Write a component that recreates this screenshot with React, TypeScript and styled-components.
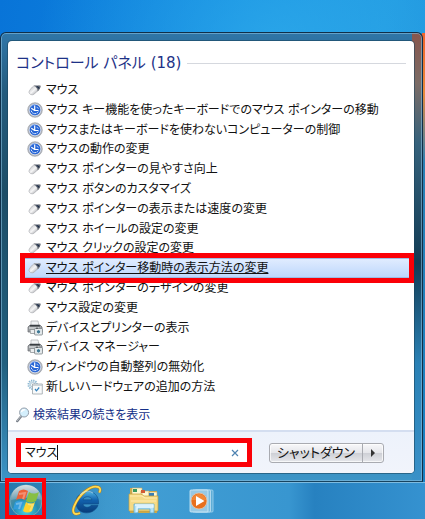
import React, { useState } from "react";
import styled, { createGlobalStyle, css } from "styled-components";

const GlobalStyle = createGlobalStyle`
  * { box-sizing: border-box; }
  body {
    margin: 0;
    font-family: "DejaVu Sans", "Noto Sans CJK JP", sans-serif;
    font-size: 12px;
    color: #111;
  }
  button, input { font: inherit; color: inherit; }
`;

const Desktop = styled.div`
  min-height: 100vh;
  display: flex;
  flex-direction: column;
  overflow: hidden;
  background:
    linear-gradient(#f0642c, #e88a3a 60px, #2a80b4 130px, #1680c4) right 33px / 3px 100% no-repeat,
    linear-gradient(110deg, transparent 78%, rgba(120, 205, 245, 0.2) 79%, transparent 84%),
    radial-gradient(circle at 65% 12%, rgba(50, 175, 236, 0.75), transparent 45%),
    linear-gradient(100deg, #0874d8, #1189e0 45%, #2098e0 75%, #1e8fd8);
`;

const StartMenu = styled.main`
  margin: 32px 2px 0 0;
  padding: 8px 8px 8px 7px;
  border: 1px solid #102f49;
  border-bottom-color: #17435f;
  border-radius: 6px 6px 0 0;
  box-shadow: inset 0 0 0 1px rgba(135, 190, 222, 0.6);
  background:
    linear-gradient(#88564d, #7c6c66 50px, #36627c 110px, #123c55 230px, #2a81b5 330px, #3991c8) right / 10px 100% no-repeat,
    linear-gradient(#2f76a8, #245b7d 60px, #1d4d67 160px, #215f7e 330px, #3c95c8);
`;

const Panel = styled.div`
  border-radius: 4px;
  overflow: hidden;
  background: #fff;
  box-shadow: 0 0 0 1px rgba(25, 65, 90, 0.55);
`;

const Results = styled.section`
  padding: 10px 8px 5px 8px;
`;

const Heading = styled.h1`
  display: flex;
  align-items: center;
  gap: 6px;
  margin: 0 0 5px;
  font-size: 15px;
  line-height: 24px;
  font-weight: 400;
  color: #1e3287;
  font-feature-settings: "palt";
  white-space: nowrap;

  &::after {
    content: "";
    flex: 1;
    height: 1px;
    background: #d5d8de;
  }
`;

const ResultList = styled.ul`
  display: grid;
  grid-auto-rows: 1fr;
  min-height: 317px;
  margin: 0 -4px 8px 8px;
  padding: 0;
  list-style: none;
`;

const marked = css`
  &::after {
    content: "";
    position: absolute;
    inset: -5px -4px;
    border: 5px solid #fb0007;
    pointer-events: none;
  }
`;

const ResultItem = styled.li<{ $active?: boolean }>`
  position: relative;
  z-index: ${(p) => (p.$active ? 1 : 0)};
  display: flex;
  ${(p) => p.$active && marked}
`;

const ResultLink = styled.a<{ $active?: boolean }>`
  flex: 1;
  display: flex;
  align-items: center;
  gap: 3px;
  padding-left: 3px;
  line-height: 16px;
  font-feature-settings: "palt";
  white-space: nowrap;
  color: #111;
  text-decoration: ${(p) => (p.$active ? "underline" : "none")};
  background: ${(p) => (p.$active ? "linear-gradient(#e2edff, #bcd6fc)" : "none")};
  box-shadow: ${(p) => (p.$active ? "inset 0 0 0 1px #9dbce4" : "none")};
`;

const MoreLink = styled.a`
  display: flex;
  align-items: center;
  gap: 3px;
  line-height: 20px;
  font-feature-settings: "palt";
  color: #142f88;
  text-decoration: none;
`;

const Footer = styled.footer`
  display: flex;
  align-items: center;
  gap: 20px;
  height: 43px;
  padding: 0 30px 0 11px;
  border-top: 2px solid #d4def0;
  background: linear-gradient(#edf2fb, #f1f4fb);
`;

const SearchBox = styled.form`
  position: relative;
  flex: 1;
  display: flex;
  align-items: center;
  height: 21px;
  border: 1px solid #8d99a8;
  background: #fff;
  ${marked}
`;

const SearchInput = styled.input`
  field-sizing: content;
  min-width: 0;
  padding: 0 0 0 5px;
  border: 0;
  outline: 0;
  line-height: 16px;
  caret-color: transparent;
  background: transparent;
  font-feature-settings: "palt";
`;

const Caret = styled.span`
  width: 1px;
  height: 15px;
  background: #111;
`;

const ClearButton = styled.button`
  display: flex;
  margin-left: auto;
  padding: 0 9px;
  border: 0;
  background: none;
`;

const PowerGroup = styled.div`
  display: flex;
  height: 20px;
  border: 1px solid #a9abb1;
  border-radius: 3px;
  background: linear-gradient(#f8f8fa, #e5e6ea 48%, #cdcfd5 50%, #e6e7eb);
  box-shadow: inset 0 0 0 1px rgba(255, 255, 255, 0.7);
`;

const PowerButton = styled.button<{ $width: number }>`
  width: ${(p) => p.$width}px;
  display: flex;
  align-items: center;
  justify-content: center;
  padding: 0;
  border: 0;
  background: none;
  font-size: 13px;
  line-height: 16px;
  font-feature-settings: "palt";
  white-space: nowrap;

  & + & { border-left: 1px solid #a9abb1; }
`;

const Taskbar = styled.nav`
  display: flex;
  flex: 1;
  min-height: 37px;
  align-items: center;
  gap: 22px;
  padding-left: 5px;
  border-top: 1px solid #7dbbe0;
  background:
    linear-gradient(100deg, rgba(15, 90, 140, 0.4), transparent 34%),
    linear-gradient(90deg, #3488be, #439fd4 25%, #3896d0 68%, #2781c0 74%, #3592d0);
`;

const TaskButton = styled.button<{ $start?: boolean }>`
  position: relative;
  display: flex;
  width: ${(p) => (p.$start ? 41 : 36)}px;
  height: 36px;
  align-items: center;
  justify-content: center;
  padding: 0;
  border: 0;
  background: none;

  ${(p) => p.$start && css`
    &::after {
      content: "";
      position: absolute;
      inset: -5px 0 0;
      border: 4px solid #fb0007;
      pointer-events: none;
    }
  `}
`;

const MouseIcon = () => (
  <svg width="16" height="16" viewBox="0 0 16 16" aria-hidden="true">
    <defs>
      <linearGradient id="mouseShell" x1="0" y1="0" x2="1" y2="1">
        <stop offset="0" stopColor="#b4b6ba" />
        <stop offset=".5" stopColor="#f5f5f6" />
        <stop offset="1" stopColor="#85888d" />
      </linearGradient>
    </defs>
    <path d="M2 10.5C1.6 9 5.3 4.7 7 3.7l3.8 1.2c1.3.7 1.4 2.3.4 3.5L7 12.2c-2 1.4-4.6.2-5-1.7Z" fill="url(#mouseShell)" stroke="#a4a6ab" strokeWidth=".6" />
    <path d="M7 3.7c1.5-.8 3.7-.9 6.8.1-.1 2-1.5 4.2-3.1 5.6C10.7 7.1 9.4 5.1 7 3.7Z" fill="#6b7078" />
    <path d="M9.5 4.2c1.4.2 2.1.9 2.6 2.4" fill="none" stroke="#1c2c48" strokeWidth="1.6" />
    <path d="M8.2 3.8c1.2-.4 2.5-.3 3.4 0" fill="none" stroke="#ced1d5" strokeWidth=".8" />
  </svg>
);

const AccessIcon = () => (
  <svg width="16" height="16" viewBox="0 0 16 16" aria-hidden="true">
    <circle cx="8" cy="8" r="7.3" fill="#b5b9c1" stroke="#8f939c" strokeWidth=".6" />
    <circle cx="8" cy="8" r="5.8" fill="#2866d5" stroke="#e9edf4" strokeWidth=".7" />
    <path d="M3.4 5.5C4.5 3.5 6 2.8 8 2.8" stroke="#78a4ee" fill="none" />
    <path d="M7.7 3.6v4.9h3.8M4.3 6.2l3.4 2.3" stroke="#fff" strokeWidth="1.2" fill="none" />
    <path d="M4.2 8.6c.4 3.6 5.6 4.2 7.3.8" stroke="#e2ecff" strokeWidth="1" strokeDasharray="1.6 .7" fill="none" />
    <path d="m9.6 5.2 2 1.2" stroke="#b9d0fa" fill="none" />
  </svg>
);

const PrinterIcon = () => (
  <svg width="16" height="16" viewBox="0 0 16 16" aria-hidden="true">
    <path d="M4 1h7l1 5H4Z" fill="#f1f3f4" stroke="#a9adaf" strokeWidth=".7" />
    <path d="M1 7 3 5h10l2 2v5H1Z" fill="#a0a4a7" stroke="#64696d" strokeWidth=".7" />
    <path d="M3.2 5h9.4l.5 1.5H2.7Z" fill="#383d41" />
    <path d="M2 8h10" stroke="#e8eaeb" />
    <path d="M3 9.5h7l1 4H3.5Z" fill="#eceeef" stroke="#7f8588" strokeWidth=".7" />
    <rect x="7.5" y="8.5" width="8" height="6.5" rx="1" fill="#e1e5e7" stroke="#6f777b" strokeWidth=".7" />
    <circle cx="11.5" cy="11.8" r="2.1" fill="#3f7894" stroke="#f9fbfb" strokeWidth=".8" />
    <path d="M9 8.2h2" stroke="#44494c" />
  </svg>
);

const HardwareIcon = () => (
  <svg width="16" height="16" viewBox="0 0 16 16" aria-hidden="true">
    <circle cx="5.7" cy="5.7" r="4.2" fill="#e2edf3" stroke="#8cb7d1" strokeWidth="2" strokeDasharray="1.2 1" />
    <circle cx="5.7" cy="5.7" r="2.2" fill="#f9fcfe" stroke="#aec8d7" />
    <path d="M5.5 5h9.8v10H5.5Z" fill="#f8fafb" stroke="#9ca4a9" strokeWidth=".8" />
    <path d="M5.9 6.2H15" stroke="#bac4ca" />
    <path d="m8 10 1.5 1.8 2.7-3.3" fill="none" stroke="#3583bd" strokeWidth="1.2" />
  </svg>
);

const SearchIcon = () => (
  <svg width="14" height="16" viewBox="0 0 14 16" aria-hidden="true">
    <path d="m5.2 9.2-4 5" stroke="#777e87" strokeWidth="2.2" strokeLinecap="round" />
    <path d="m5 9-4 5" stroke="#c8cdd3" strokeWidth=".8" />
    <circle cx="8.1" cy="5.5" r="4.5" fill="#d4effc" stroke="#929ca8" />
    <path d="M5.4 5.1c.4-1.8 1.9-2.5 3.4-2.4" stroke="#fff" strokeWidth="1.4" fill="none" />
  </svg>
);

const StartIcon = () => (
  <svg width="34" height="34" viewBox="0 0 34 34" aria-hidden="true">
    <defs>
      <radialGradient id="orb" cx=".5" cy=".8" r=".75">
        <stop offset="0" stopColor="#49d4e7" />
        <stop offset=".5" stopColor="#288bad" />
        <stop offset="1" stopColor="#76919c" />
      </radialGradient>
      <linearGradient id="gloss" x2="0" y2="1">
        <stop offset="0" stopColor="#fff" stopOpacity=".7" />
        <stop offset="1" stopColor="#fff" stopOpacity=".15" />
      </linearGradient>
    </defs>
    <circle cx="17" cy="17" r="16" fill="url(#orb)" stroke="#71a8b8" />
    <path d="M2 16C2-4 32-4 32 16c-9-4-20-2-30 0Z" fill="url(#gloss)" />
    <path d="M10 7c3-2 6-2 9 0l-3 9c-3-2-6-2-9 0Z" fill="#ed6036" />
    <path d="M20 8c3 2 6 2 10 0l-3 9c-4 2-7 2-10 0Z" fill="#87bf43" />
    <path d="M6 18c3-2 6-2 9 0l-3 9c-3-2-6-2-8-1Z" fill="#319cdd" />
    <path d="M17 18c3 2 6 2 9 0l-3 9c-3 2-6 2-9 0Z" fill="#fed22d" />
    <path d="m10 10 6-1-2 6M7 20l5-1-2 6M19 20l5 1-3 6" fill="none" stroke="#fff" strokeOpacity=".3" strokeWidth="2" />
  </svg>
);

const BrowserIcon = () => (
  <svg width="32" height="32" viewBox="0 0 32 32" aria-hidden="true">
    <defs>
      <linearGradient id="browserBlue" x2="0" y2="1">
        <stop offset="0" stopColor="#4fb2e2" />
        <stop offset=".4" stopColor="#1262ae" />
        <stop offset="1" stopColor="#073b78" />
      </linearGradient>
    </defs>
    <path fillRule="evenodd" d="M28.5 19H13c.6 4 6.4 4.2 8.2 1.3h6.8C24 31 6 30.6 6 17.5 6 3 30 2 28.5 19ZM13 14.8h8.8c-.5-4-8-4.2-8.8 0Z" fill="url(#browserBlue)" stroke="#0e4c87" strokeWidth=".6" />
    <path d="M10 28C4.5 30.5 1.5 28 4.2 21.2 8.8 9.7 21-1 28.7 2.2c2 1.1 1.7 3.4.6 5.4" fill="none" stroke="#b77d19" strokeWidth="2.8" />
    <path d="M10 28C4.5 30.5 1.5 28 4.2 21.2 8.8 9.7 21-1 28.7 2.2c2 1.1 1.7 3.4.6 5.4" fill="none" stroke="#ffdb51" strokeWidth="1.8" />
    <path d="M10 10c3-4 9-5 13-2" fill="none" stroke="#c5edff" strokeOpacity=".6" strokeWidth="1.2" />
  </svg>
);

const FolderIcon = () => (
  <svg width="32" height="32" viewBox="0 0 32 32" aria-hidden="true">
    <path d="M2 6V3h10l2 3h15v22H2Z" fill="#cda949" />
    <path d="M4 3h10v7H4Zm9 3h8v7h-8Zm8 1h8v7h-8Z" fill="#fff7ce" stroke="#c6a763" strokeWidth=".6" />
    <path d="M5 4h4v3H5Z" fill="#36985f" /><path d="M13 5h4v3h-4Z" fill="#d25b35" /><path d="M21 8h5v3h-5Z" fill="#397eb4" />
    <path d="M1 9h12l3 2h14v15H1Z" fill="#f5da85" stroke="#c69d3c" strokeWidth=".7" />
    <path d="M2 11h12l3 2h12M3 16h25" fill="none" stroke="#ffebb0" strokeWidth="1.2" />
    <path d="M6 28v-9h20v9h-4v-4H10v4Z" fill="#b4e1f6" stroke="#5caace" strokeWidth=".8" />
    <path d="M7 20h18v2H9v5" fill="none" stroke="#e7f8ff" strokeWidth="1.3" />
  </svg>
);

const PlayerIcon = () => (
  <svg width="26" height="26" viewBox="0 0 26 26" aria-hidden="true">
    <rect x="6" y="2" width="18" height="22" rx="1" fill="#5eadd7" stroke="#a4d6ef" strokeWidth=".8" />
    <rect x="3.5" y="2" width="18" height="22" rx="1" fill="#7bbcdf" stroke="#c2e1f2" strokeWidth=".8" />
    <rect x="1" y="2" width="18" height="22" rx="1" fill="#97c9e5" stroke="#d3ecf8" strokeWidth=".8" />
    <circle cx="10" cy="13" r="8" fill="#e86f1d" stroke="#e7c8ab" strokeWidth=".8" />
    <path d="M3 12c1-8 13-8 14 0Z" fill="#f6994a" fillOpacity=".6" />
    <path d="m7 8 8.5 5L7 18Z" fill="#fff" />
  </svg>
);

const icons = { mouse: MouseIcon, access: AccessIcon, printer: PrinterIcon, hardware: HardwareIcon };

const results: { icon: keyof typeof icons; label: string; active?: boolean }[] = [
  { icon: "mouse", label: "マウス" },
  { icon: "access", label: "マウス キー機能を使ったキーボードでのマウス ポインターの移動" },
  { icon: "access", label: "マウスまたはキーボードを使わないコンピューターの制御" },
  { icon: "access", label: "マウスの動作の変更" },
  { icon: "mouse", label: "マウス ポインターの見やすさ向上" },
  { icon: "mouse", label: "マウス ボタンのカスタマイズ" },
  { icon: "mouse", label: "マウス ポインターの表示または速度の変更" },
  { icon: "mouse", label: "マウス ホイールの設定の変更" },
  { icon: "mouse", label: "マウス クリックの設定の変更" },
  { icon: "mouse", label: "マウス ポインター移動時の表示方法の変更", active: true },
  { icon: "mouse", label: "マウス ポインターのデザインの変更" },
  { icon: "mouse", label: "マウス設定の変更" },
  { icon: "printer", label: "デバイスとプリンターの表示" },
  { icon: "printer", label: "デバイス マネージャー" },
  { icon: "access", label: "ウィンドウの自動整列の無効化" },
  { icon: "hardware", label: "新しいハードウェアの追加の方法" },
];

export default function App() {
  const [query, setQuery] = useState("マウス");

  return (
    <>
      <GlobalStyle />
      <Desktop>
        <StartMenu>
          <Panel>
            <Results>
              <Heading>コントロール パネル (18)</Heading>
              <ResultList>
                {results.map(({ icon, label, active }) => {
                  const Icon = icons[icon];
                  return (
                    <ResultItem key={label} $active={active}>
                      <ResultLink href="#" $active={active}>
                        <Icon />
                        {label}
                      </ResultLink>
                    </ResultItem>
                  );
                })}
              </ResultList>
              <MoreLink href="#">
                <SearchIcon />
                検索結果の続きを表示
              </MoreLink>
            </Results>
            <Footer>
              <SearchBox onSubmit={(e) => e.preventDefault()}>
                <SearchInput
                  aria-label="検索"
                  autoFocus
                  value={query}
                  onChange={(e) => setQuery(e.target.value)}
                />
                <Caret />
                <ClearButton type="button" aria-label="クリア" onClick={() => setQuery("")}>
                  <svg width="8" height="8" viewBox="0 0 8 8" aria-hidden="true">
                    <path d="m1 1 6 6m0-6L1 7" stroke="#4e83b1" strokeWidth="1.2" />
                  </svg>
                </ClearButton>
              </SearchBox>
              <PowerGroup>
                <PowerButton $width={92}>シャットダウン</PowerButton>
                <PowerButton $width={21} aria-label="シャットダウンのオプション">
                  <svg width="4" height="8" viewBox="0 0 4 8" aria-hidden="true">
                    <path d="m0 0 4 4-4 4Z" fill="#333" />
                  </svg>
                </PowerButton>
              </PowerGroup>
            </Footer>
          </Panel>
        </StartMenu>
        <Taskbar>
          <TaskButton $start aria-label="スタート"><StartIcon /></TaskButton>
          <TaskButton aria-label="Internet Explorer"><BrowserIcon /></TaskButton>
          <TaskButton aria-label="エクスプローラー"><FolderIcon /></TaskButton>
          <TaskButton aria-label="Windows Media Player"><PlayerIcon /></TaskButton>
        </Taskbar>
      </Desktop>
    </>
  );
}
